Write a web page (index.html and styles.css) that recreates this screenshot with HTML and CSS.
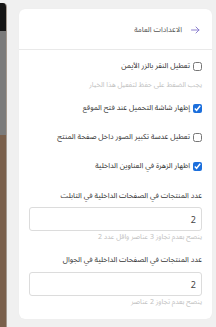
FILE: index.html
```html
<!DOCTYPE html>
<html lang="ar">
<head>
<meta charset="utf-8">
<link rel="stylesheet" href="styles.css">
</head>
<body>
<div class="page">
  <div class="strip">
    <div class="strip-dark"></div>
    <div class="strip-gray"></div>
    <div class="strip-brown"></div>
  </div>
  <div class="card" dir="rtl">
    <div class="card-head">
      <svg class="arrow" width="9" height="8" viewBox="0 0 9 8"><path d="M0.5 4H8M5 1l3 3-3 3" fill="none" stroke="#8c80cf" stroke-width="1" stroke-linecap="round" stroke-linejoin="round"/></svg>
      <span class="title">الاعدادات العامة</span>
    </div>
    <div class="card-body">
      <label class="check r1"><input type="checkbox"><span>تعطيل النقر بالزر الأيمن</span></label>
      <div class="hint h1">يجب الضغط على حفظ لتفعيل هذا الخيار</div>
      <label class="check r2"><input type="checkbox" checked><span>إظهار شاشة التحميل عند فتح الموقع</span></label>
      <label class="check r3"><input type="checkbox"><span>تعطيل عدسة تكبير الصور داخل صفحة المنتج</span></label>
      <label class="check r3"><input type="checkbox" checked><span>اظهار الزهرة في العناوين الداخلية</span></label>
      <div class="field-label l1">عدد المنتجات في الصفحات الداخلية في التابلت</div>
      <input class="num" type="text" value="2">
      <div class="hint">ينصح بعدم تجاوز 3 عناصر واقل عدد 2</div>
      <div class="field-label l2">عدد المنتجات في الصفحات الداخلية في الجوال</div>
      <input class="num" type="text" value="2">
      <div class="hint">ينصح بعدم تجاوز 2 عناصر</div>
    </div>
  </div>
</div>
</body>
</html>
```
FILE: styles.css
```css
html, body {
  margin: 0;
  padding: 0;
  background: #f0f0f0;
  width: 216px;
  height: 327px;
  overflow: hidden;
  font-family: "Noto Sans Arabic", "DejaVu Sans", sans-serif;
}
.page {
  display: flex;
  align-items: flex-start;
}
.strip {
  width: 7px;
  margin-top: 3px;
  height: 324px;
  display: flex;
  flex-direction: column;
  border-top-right-radius: 4px;
  overflow: hidden;
  border-right: 1px solid #a59a90;
  box-sizing: border-box;
}
.strip-dark { height: 28px; background: #151515; }
.strip-gray { height: 104px; background: #7b7b7b; }
.strip-brown { flex: 1; background: #7a604c; }
.card {
  margin-left: 12px;
  margin-top: 9px;
  width: 193px;
  height: 310px;
  background: #fff;
  border-radius: 6px;
  box-shadow: 0 0 1px rgba(0,0,0,0.06);
}
.card-head {
  height: 41px;
  box-sizing: border-box;
  border-bottom: 1px solid #e9e9e9;
  display: flex;
  align-items: center;
  gap: 9px;
  padding-right: 12px;
  padding-top: 1px;
}
.arrow { display: block; }
.title {
  font-size: 7.5px;
  color: #555;
  white-space: nowrap;
}
.card-body {
  padding: 10px 10px 0 10px;
  display: flex;
  flex-direction: column;
}
.check {
  display: flex;
  align-items: center;
  gap: 3px;
  height: 12px;
  font-size: 7.5px;
  color: #333;
  white-space: nowrap;
}
.check input {
  width: 9px;
  height: 9px;
  margin: 0;
  accent-color: #1c6fdc;
}
.r2 { margin-top: 11px; }
.r3 { margin-top: 17px; }
.hint {
  font-size: 7px;
  line-height: 11px;
  color: #c0c0c0;
  white-space: nowrap;
}
.h1 { margin-top: 7px; line-height: 12px; }
.field-label {
  font-size: 7.5px;
  line-height: 12px;
  color: #333;
  white-space: nowrap;
}
.l1 { margin-top: 18px; }
.l2 { margin-top: 12px; }
.num {
  margin: 5px 0 0 0;
  height: 24px;
  box-sizing: border-box;
  border: 1px solid #dcdcdc;
  border-radius: 3px;
  padding: 0 5px;
  font-family: "Noto Sans", "DejaVu Sans", sans-serif;
  font-size: 9px;
  color: #444;
  text-align: right;
  direction: rtl;
  background: #fff;
  width: 100%;
}
.l2 + .num { margin-top: 6px; }
```
